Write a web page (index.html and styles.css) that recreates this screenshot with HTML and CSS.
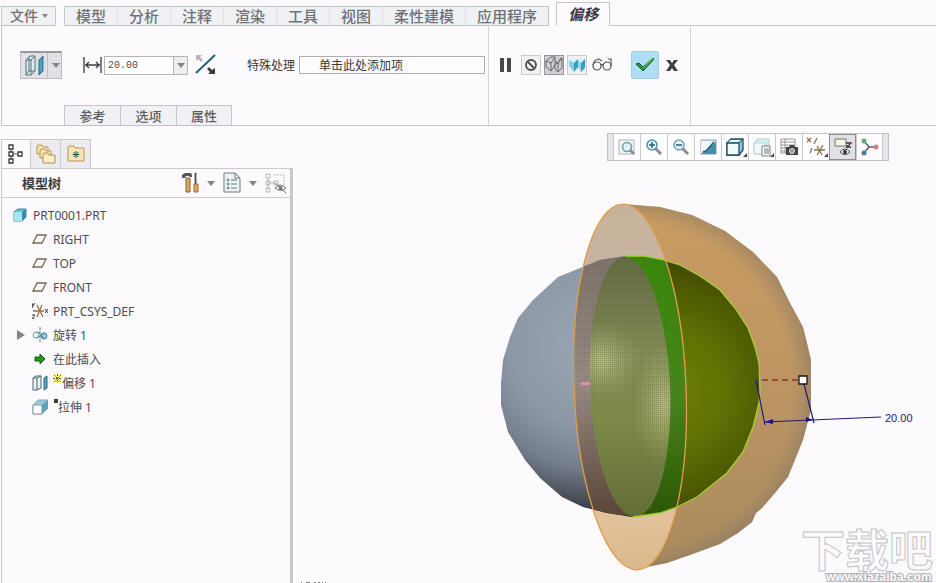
FILE: index.html
```html
<!DOCTYPE html>
<html lang="zh-CN">
<head>
<meta charset="utf-8">
<title>PRT0001 - 偏移</title>
<link rel="stylesheet" href="styles.css">
</head>
<body>
<header class="ribbon">
  <nav class="menu" aria-label="主菜单">
    <button class="menu-tab menu-file">文件<span class="caret caret-small"></span></button>
    <div class="menu-group">
      <button class="menu-tab">模型</button>
      <button class="menu-tab">分析</button>
      <button class="menu-tab">注释</button>
      <button class="menu-tab">渲染</button>
      <button class="menu-tab">工具</button>
      <button class="menu-tab">视图</button>
      <button class="menu-tab">柔性建模</button>
      <button class="menu-tab">应用程序</button>
    </div>
    <button class="menu-tab menu-active">偏移</button>
    <span class="menu-rest"></span>
  </nav>
  <div class="dashboard">
    <section class="settings">
      <div class="controls">
        <button class="type-button" aria-label="偏移类型">
          <svg width="24" height="26" viewBox="0 0 24 26"><path d="M4 7l4-4h5v15l-4 4H4z" fill="#d9edf2" stroke="#57717b"/><path d="M4 7h5v15M9 7l4-4M7 4v14l-3 4M7 18h6" fill="none" stroke="#57717b"/><path d="M17 7l4-4v15l-4 4z" fill="#4aa3c4" stroke="#2e6d87"/></svg>
          <span class="type-arrow"><span class="caret"></span></span>
        </button>
        <svg class="width-icon" width="20" height="18" viewBox="0 0 20 18"><path d="M1 1v16M18 1v16M2 9h15M6 6L3 9l3 3M13 6l3 3-3 3" fill="none" stroke="#3c3c40" stroke-width="1.3"/></svg>
        <div class="combo">
          <input class="combo-input" type="text" value="20.00" aria-label="偏移距离">
          <button class="combo-arrow" aria-label="最近使用的值"><span class="caret"></span></button>
        </div>
        <button class="plain flip" aria-label="反向">
          <svg width="24" height="24" viewBox="0 0 24 24"><path d="M2 20L21 2" stroke="#255f7d" stroke-width="2"/><path d="M2 2h6L6 4l3 3-2 2-3-3-2 2z" fill="#b9b4b4"/><path d="M21 21h-7l2-2-3-3 2-2 3 3 3-2z" fill="#3b3a3e"/></svg>
        </button>
        <label class="collector-label" for="special">特殊处理</label>
        <input class="collector" id="special" type="text" value="单击此处添加项">
      </div>
      <div class="panel-tabs">
        <button class="panel-tab">参考</button>
        <button class="panel-tab">选项</button>
        <button class="panel-tab">属性</button>
      </div>
    </section>
    <section class="actions">
      <button class="plain pause" aria-label="暂停"><svg width="14" height="16" viewBox="0 0 14 16"><path d="M1 1h4v14H1zM8 1h4v14H8z" fill="#48484c"/></svg></button>
      <button class="mini" aria-label="无预览"><svg width="18" height="18" viewBox="0 0 18 18"><circle cx="9" cy="9" r="5" fill="none" stroke="#4c4c50" stroke-width="1.8"/><path d="M5.5 5.5l7 7" stroke="#4c4c50" stroke-width="1.8"/></svg></button>
      <button class="mini mini-pressed" aria-label="未附着预览"><svg width="18" height="18" viewBox="0 0 18 18"><path d="M1 5l5-4h4v8l-4 6-5-4zM1 5l5 2v8M6 7l4-6M10 9l6-7h1v10l-4 4-3-3zM10 5l3 3v8M13 8l4-6" fill="none" stroke="#5d5d62" stroke-width=".9"/></svg></button>
      <button class="mini" aria-label="附着预览"><svg width="18" height="18" viewBox="0 0 18 18"><path d="M0 3h18v5H0z" fill="#d5f2f8"/><path d="M1 4l5 3v9l-5-6z" fill="#82cde2"/><path d="M6 7l4-4v8l-4 5z" fill="#379dc0"/><path d="M10 4l3 3v9l-3-5z" fill="#8ed6e8"/><path d="M13 7l4-4v9l-4 4z" fill="#379dc0"/></svg></button>
      <button class="plain glasses" aria-label="预览"><svg width="20" height="16" viewBox="0 0 20 16"><g fill="none" stroke="#55555a" stroke-width="1.2"><circle cx="5" cy="9" r="4"/><circle cx="15" cy="9" r="4"/><path d="M9 8q1-1 2 0M1 8q1-6 6-6l3 2M19 9V2h-3"/></g></svg></button>
      <button class="confirm" aria-label="确定"><svg width="22" height="20" viewBox="0 0 22 20"><path d="M2 9l3-1 4 4L19 3l1 1L9 16z" fill="#2b9344" stroke="#165a2c"/><path d="M9 13L19 3" stroke="#85d26b"/></svg></button>
      <button class="plain cancel" aria-label="取消"><svg width="14" height="14" viewBox="0 0 14 14"><path d="M1 2h4l2 3 2-3h4L9 7l4 6H9L7 10l-2 3H1l4-6z" fill="#414145"/></svg></button>
    </section>
  </div>
</header>

<main class="workspace">
  <aside class="navigator">
    <div class="nav-tabs">
      <button class="nav-tab nav-current" aria-label="模型树"><svg width="16" height="22" viewBox="0 0 16 22"><path d="M3 6v12M3 11h7" stroke="#55555a" fill="none"/><path d="M1 2h4v4H1zM1 9h4v4H1zM1 16h4v4H1zM10 9h4v4h-4z" fill="#fff" stroke="#38383c" stroke-width="1.3"/></svg></button>
      <button class="nav-tab" aria-label="文件夹浏览器"><svg width="20" height="20" viewBox="0 0 20 20"><g fill="#f8e3ae" stroke="#b3965c"><path d="M1 2l1-1h4l1 2h5v7H1z"/><path d="M4 7l1-2h4l1 2h5v7H4z"/><path d="M7 11l1-2h4l1 2h6v8H7z"/></g><path d="M8 12h10v6H8z" fill="#fff0c5"/></svg></button>
      <button class="nav-tab" aria-label="收藏夹"><svg width="18" height="18" viewBox="0 0 18 18"><path d="M1 3l1-2h5l1 2h9v13H1z" fill="#fae6b4" stroke="#b39556"/><path d="M9 6v7M5.5 9.5h7M6.500 7l5 5M11.500 7l-5 5" stroke="#245b51"/></svg></button>
    </div>
    <div class="nav-panel">
      <div class="nav-header">
        <h2 class="nav-title">模型树</h2>
        <button class="plain" aria-label="设置"><svg width="18" height="22" viewBox="0 0 18 22"><path d="M1 3l3-2h6l1 2v2H9L8 4H5L4 6H1z" fill="#55565b"/><path d="M5 6h4v14H5z" fill="#dda85d" stroke="#886134"/><path d="M14 1h1v11h-1z" stroke="#66676c"/><path d="M13 12h4v8h-4z" fill="#e2a853" stroke="#946a36"/></svg></button>
        <span class="caret"></span>
        <button class="plain" aria-label="显示"><svg width="18" height="22" viewBox="0 0 18 22"><path d="M1 1h11l5 5v14H1z" fill="#eef4f5" stroke="#707a80"/><path d="M12 1v5h5" fill="none" stroke="#707a80"/><path d="M8 8h6M8 12h6M8 16h6" stroke="#54777d"/><g fill="none" stroke="#54777d"><circle cx="5" cy="8" r="1"/><circle cx="5" cy="12" r="1"/><circle cx="5" cy="16" r="1"/></g></svg></button>
        <span class="caret"></span>
        <button class="plain" aria-label="隐藏树"><svg width="22" height="22" viewBox="0 0 22 22"><g fill="none" stroke="#b6b5ba"><path d="M1 2h4v4H1zM1 9h4v4H1zM1 16h4v4H1zM9 9h4v4H9zM3 6v12M5 11h4"/><path d="M9 3h10v10" stroke-dasharray="2 1"/></g><path d="M10 16q5-6 11 0-5 5-11 0z" fill="#eee" stroke="#77777c"/><circle cx="15.5" cy="16" r="2" fill="#77777c"/><path d="M10 11l11 10" stroke="#77777c"/></svg></button>
      </div>
      <ul class="tree">
        <li class="row row-root"><svg width="14" height="14" viewBox="0 0 14 14"><path d="M1 4l4-3h8v8l-4 4H1z" fill="#62c4dc" stroke="#45808e"/><path d="M1 4h8v9H1z" fill="#a4e6f2"/><path d="M9 4l4-3v8l-4 4z" fill="#3590ab"/></svg><span>PRT0001.PRT</span></li>
        <li class="row"><svg width="16" height="16" viewBox="0 0 16 16"><path d="M5 4h9l-4 8H1z" fill="none" stroke="#786b50" stroke-width="1.3"/></svg><span>RIGHT</span></li>
        <li class="row"><svg width="16" height="16" viewBox="0 0 16 16"><path d="M5 4h9l-4 8H1z" fill="none" stroke="#786b50" stroke-width="1.3"/></svg><span>TOP</span></li>
        <li class="row"><svg width="16" height="16" viewBox="0 0 16 16"><path d="M5 4h9l-4 8H1z" fill="none" stroke="#786b50" stroke-width="1.3"/></svg><span>FRONT</span></li>
        <li class="row"><svg width="16" height="16" viewBox="0 0 16 16"><path d="M1 8h11M5 2l6 12M10 2L5 14" stroke="#94714b" stroke-width="1.3"/><path d="M0 0l1 3 2-3M1 3L0 5M13 6l3 4M16 6l-3 4M0 12h3l-3 4h3" fill="none" stroke="#37373b"/></svg><span>PRT_CSYS_DEF</span></li>
        <li class="row row-parent"><button class="plain expander" aria-label="展开"><svg width="8" height="10" viewBox="0 0 8 10"><path d="M0 0l8 5-8 5z" fill="#858489"/></svg></button><svg width="16" height="16" viewBox="0 0 16 16"><path d="M8 0v16" stroke="#58757f" stroke-dasharray="3 1"/><circle cx="4" cy="8" r="3" fill="#e4f1f5" stroke="#83a9b6"/><circle cx="12" cy="9" r="3" fill="#92cfe0" stroke="#3b8199"/><path d="M4 5q4 0 8 7M4 11q4 0 8-6" fill="none" stroke="#4a8ca1"/></svg><span>旋转 1</span></li>
        <li class="row"><svg width="16" height="16" viewBox="0 0 16 16"><path d="M3 6h5V3l5 5-5 5v-3H3z" fill="#2c941e" stroke="#16600e"/></svg><span>在此插入</span></li>
        <li class="row"><svg width="16" height="16" viewBox="0 0 16 16"><path d="M1 3l3-2h5v12l-4 2H1z" fill="#e8f4f6" stroke="#4a636d"/><path d="M1 3h4v12M5 3l4-2" fill="none" stroke="#4a636d"/><path d="M12 3l3-2v12l-3 2z" fill="#4da3c0" stroke="#2f6982"/></svg><span class="state"><svg class="mark" width="9" height="9" viewBox="0 0 9 9"><path d="M0 0h9v9H0z" fill="#fff78a"/><path d="M4.500 0v9M0 4.500h9M1 1l7 7M8 1L1 8" stroke="#6a651c" stroke-dasharray="2 1"/></svg>偏移 1</span></li>
        <li class="row"><svg width="16" height="16" viewBox="0 0 16 16"><path d="M1 6l5-5h10v8l-6 6H1z" fill="#91c9df" stroke="#8fb0bd"/><path d="M1 6h9v9H1z" fill="#fff" stroke="#8095a0"/><path d="M10 6l6-5v8l-6 6z" fill="#5fa0be"/></svg><span class="state"><svg class="mark" width="5" height="9" viewBox="0 0 5 9"><path d="M1 1h4v4H1z" fill="#3d3d40"/></svg>拉伸 1</span></li>
      </ul>
    </div>
  </aside>

  <section class="graphics">
    <div class="view-tools" role="toolbar" aria-label="视图">
      <span class="grip"></span>
      <button class="tool" aria-label="重新调整"><svg width="20" height="20" viewBox="0 0 20 20"><path d="M2 3h15v14H2z" fill="#f1f5f6" stroke="#a9b4b9"/><circle cx="10" cy="10" r="4.500" fill="#e0f4f7" stroke="#6a9aa3" stroke-width="1.500"/><path d="M13 13l4 4" stroke="#8d8b8d" stroke-width="2.500"/></svg></button>
      <button class="tool" aria-label="放大"><svg width="20" height="20" viewBox="0 0 20 20"><path d="M11 11l6 6" stroke="#8d8b8d" stroke-width="3"/><circle cx="8" cy="8" r="5" fill="#e1f6fa" stroke="#50919f" stroke-width="1.500"/><path d="M5 8h6M8 5v6" stroke="#225e70" stroke-width="1.500"/></svg></button>
      <button class="tool" aria-label="缩小"><svg width="20" height="20" viewBox="0 0 20 20"><path d="M11 11l6 6" stroke="#8d8b8d" stroke-width="3"/><circle cx="8" cy="8" r="5" fill="#e1f6fa" stroke="#76a2ad" stroke-width="1.500"/><path d="M5 8h6" stroke="#225e70" stroke-width="1.500"/></svg></button>
      <button class="tool" aria-label="重画"><svg width="20" height="20" viewBox="0 0 20 20"><path d="M3 3h15v14H3z" fill="#c6e3eb" stroke="#92a3ad"/><path d="M3 17h15V5z" fill="#4790ad"/><path d="M3 4h12L8 14l-5 2z" fill="#eef7f9"/><path d="M5 15l3-1 8-9" fill="none" stroke="#2d5c70" stroke-width="1.500"/></svg></button>
      <button class="tool" aria-label="显示样式"><svg width="20" height="20" viewBox="0 0 20 20"><path d="M2 6l4-4h12v11l-4 5H2z" fill="#90c8dc" stroke="#214d5c" stroke-width="1.300"/><path d="M2 6h12v12H2z" fill="#f0fafc" stroke="#214d5c" stroke-width="1.300"/><path d="M3 5l3-2h10l-3 2z" fill="#e8f7fa"/><path d="M14 6l4-4" stroke="#214d5c"/></svg><span class="corner"></span></button>
      <button class="tool" aria-label="已命名视图"><svg width="20" height="20" viewBox="0 0 20 20"><path d="M2 6l4-4h11v11l-4 4H2z" fill="#d8edf1" stroke="#b2cdd3"/><path d="M2 6h11v11H2z" fill="#eefafc" stroke="#b7d3d8"/><path d="M10 9h8v10h-8z" fill="#fff" stroke="#7c7b7d"/><path d="M12 12h5M12 14h5M12 16h5" stroke="#737377"/></svg><span class="corner"></span></button>
      <button class="tool" aria-label="视图管理器"><svg width="20" height="20" viewBox="0 0 20 20"><path d="M2 2h14v14H2zM2 5h14M2 8h14M2 11h14M2 14h14M6 2v14" fill="#fff" stroke="#96969a"/><path d="M7 10h3l1-2h4l1 2h3v8H7z" fill="#414146"/><circle cx="13" cy="14" r="2.500" fill="#9a9a9e" stroke="#e3e3e5"/></svg></button>
      <button class="tool" aria-label="基准显示"><svg width="20" height="20" viewBox="0 0 20 20"><g fill="none" stroke="#8f7044" stroke-width="1.300"><path d="M1 1l4 4M5 1L1 5M11 1L8 7M6 11l-2 5M8 13h11M11 9l5 9M17 8l-6 10"/></g></svg><span class="corner"></span></button>
      <button class="tool tool-pressed" aria-label="注释显示"><svg width="20" height="20" viewBox="0 0 20 20"><path d="M2 2h11v7H2z" fill="#f7f5e9" stroke="#77776b"/><path d="M13 6h5l-4 4h4M14 8v3" fill="none" stroke="#39393c" stroke-width="1.300"/><path d="M7 15q5-6 10 0-5 5-10 0z" fill="#fff" stroke="#3d3d42"/><circle cx="12" cy="15" r="2" fill="#303035"/></svg></button>
      <button class="tool" aria-label="旋转中心"><svg width="20" height="20" viewBox="0 0 20 20"><path d="M4 4l5 6-5 6M9 10h7" fill="none" stroke="#58605f" stroke-width="1.500"/><circle cx="4" cy="4" r="2.500" fill="#65aa82"/><circle cx="4" cy="16" r="2.500" fill="#487d9e"/><circle cx="16" cy="10" r="2.500" fill="#c78386"/></svg></button>
      <span class="grip"></span>
    </div>
    <svg class="scene" viewBox="293 162 643 421" preserveAspectRatio="xMinYMin meet" role="img" aria-label="球面偏移预览">
      <defs>
        <linearGradient id="shell" x1="0" y1="0" x2="0" y2="1"><stop offset="0" stop-color="#c99b60"/><stop offset=".5" stop-color="#bd9563"/><stop offset="1" stop-color="#a98a5d"/></linearGradient>
        <radialGradient id="shellEdge" gradientUnits="userSpaceOnUse" cx="628" cy="387" r="186"><stop offset=".88" stop-color="#777" stop-opacity="0"/><stop offset="1" stop-color="#6f6a5e" stop-opacity=".4"/></radialGradient>
        <linearGradient id="cut" x1="0" y1="0" x2="0" y2="1"><stop offset="0" stop-color="#c8b29a"/><stop offset=".25" stop-color="#c9b5a5"/><stop offset=".85" stop-color="#e2c29b"/><stop offset="1" stop-color="#dbb88a"/></linearGradient>
        <radialGradient id="steel" gradientUnits="userSpaceOnUse" cx="590" cy="345" r="180"><stop offset="0" stop-color="#9aa5b4"/><stop offset=".45" stop-color="#8d98a7"/><stop offset=".68" stop-color="#747e8b"/><stop offset=".84" stop-color="#4c535c"/><stop offset="1" stop-color="#24282c"/></radialGradient>
        <radialGradient id="olive" gradientUnits="userSpaceOnUse" cx="665" cy="390" r="140"><stop offset="0" stop-color="#6e7e06"/><stop offset=".4" stop-color="#627305"/><stop offset=".75" stop-color="#4c5902"/><stop offset="1" stop-color="#3a4100"/></radialGradient>
        <linearGradient id="mauve" x1="0" y1="0" x2="0" y2="1"><stop offset="0" stop-color="#7e7470"/><stop offset=".5" stop-color="#9c8d89"/><stop offset="1" stop-color="#5a4339"/></linearGradient>
        <linearGradient id="strip" x1="0" y1="0" x2="0" y2="1"><stop offset="0" stop-color="#368c06"/><stop offset=".55" stop-color="#46881a"/><stop offset="1" stop-color="#285600"/></linearGradient>
        <linearGradient id="inner" x1="0" y1="0" x2="0" y2="1"><stop offset="0" stop-color="#626b42"/><stop offset=".4" stop-color="#85905a"/><stop offset=".65" stop-color="#7f8d49"/><stop offset="1" stop-color="#647038"/></linearGradient>
        <radialGradient id="glow"><stop offset="0" stop-color="#c4c892" stop-opacity=".75"/><stop offset="1" stop-color="#a4ac70" stop-opacity="0"/></radialGradient>
        <pattern id="mesh" width="2" height="2" patternUnits="userSpaceOnUse"><path d="M0 0h1v1H0z" fill="#52502c" fill-opacity=".35"/></pattern>
        <clipPath id="ball"><path d="M633 517L607 513 583 507 562 497 540 478 525 460 508 432 501 405V383L503 360 510 337 518 318 533 300 558 277 580 268 600 260 625 256 645 256 660 259 680 265 700 276 720 290 735 308 748 328 755 347 759 363 760 390 759 403 753 427 743 452 727 473 697 497 677 507 660 513z"/></clipPath>
        <clipPath id="plane"><ellipse cx="630" cy="387" rx="56" ry="183" transform="rotate(-2.4 630 387)"/></clipPath>
        <clipPath id="disc"><ellipse cx="630" cy="387" rx="40" ry="130" transform="rotate(-2.4 630 387)"/></clipPath>
        <path id="shellShape" d="M623 204L660 207 692 215 725 231 753 252 777 277 790 303 803 327 807 343 811 360V410L803 440 788 477 775 493 762 508 756 513 752 522 738 533 720 544 690 555 667 563 637 569 630 387z"/>
      </defs>
      <use href="#shellShape" fill="url(#shell)"/>
      <use href="#shellShape" fill="url(#shellEdge)"/>
      <ellipse cx="630" cy="387" rx="56" ry="183" transform="rotate(-2.4 630 387)" fill="url(#cut)"/>
      <g clip-path="url(#ball)">
        <path d="M500 250h135v270H500z" fill="url(#steel)"/>
        <path d="M630 250h135v270H630z" fill="url(#olive)"/>
        <g clip-path="url(#plane)">
          <path d="M570 255h60v262h-60z" fill="url(#mauve)"/>
          <path d="M625 255h70v262h-70z" fill="url(#strip)"/>
          <g clip-path="url(#disc)">
            <path d="M585 255h90v262h-90z" fill="url(#inner)"/>
            <circle cx="602" cy="361" r="38" fill="url(#glow)"/>
            <ellipse cx="664" cy="405" rx="32" ry="60" fill="url(#glow)"/>
          </g>
          <path d="M570 255h120v262H570z" fill="url(#mesh)"/>
        </g>
      </g>
      <path d="M625 256L645 256 660 259 680 265 700 276 720 290 735 308 748 328 755 347 759 363 760 390 759 403 753 427 743 452 727 473 697 497 677 507 660 513 633 517" fill="none" stroke="#a6cf35" stroke-width="1.300"/>
      <ellipse cx="630" cy="387" rx="56" ry="183" transform="rotate(-2.4 630 387)" fill="none" stroke="#df9d4c" stroke-width="1.300"/>
      <path d="M581 382h9v3h-9z" fill="#e18bb0"/>
      <path d="M762 380h37" stroke="#96302b" stroke-width="1.300" stroke-dasharray="6 4"/>
      <path d="M756 380l9 45M804 384l10 39M765 422l116-5" fill="none" stroke="#201779" stroke-width="1.200"/>
      <path d="M765 422l8-3v5zM813 420l-7-3v5z" fill="#201779"/>
      <path d="M799 376h8v8h-8z" fill="#fff" stroke="#19191c" stroke-width="1.300"/>
      <text class="dimension" x="885" y="422">20.00</text>
      <text class="brand" x="801" y="567">下载吧</text>
      <text class="brand-url" x="826" y="581">www.xiazaiba.com</text>
      <path d="M301 582h1v1h-1zM306 582h4v1h-4zM314 582h2v1h-2zM318 582h2v1h-2zM322 582h1v1h-1zM325 582h1v1h-1z" fill="#77777a"/>
    </svg>
  </section>
</main>
</body>
</html>
```
FILE: styles.css
```css
* { box-sizing: border-box; }

body {
  margin: 0;
  min-height: 100vh;
  display: flex;
  flex-direction: column;
  background: #fcfafd;
  color: #4c4b50;
  font-family: "Noto Sans", "Noto Sans CJK SC", sans-serif;
  font-size: 12px;
}

button, input { font: inherit; color: inherit; margin: 0; }
button { display: flex; align-items: center; justify-content: center; padding: 0; }
svg { display: block; flex: none; }

.plain { border: 0; background: none; }

.caret {
  flex: none;
  border: 4px solid transparent;
  border-top: 5px solid #858489;
  border-bottom: 0;
}
.caret-small { border-width: 4px 3px 0; margin-left: 4px; }

/* Ribbon */
.menu { display: flex; align-items: flex-end; height: 26px; padding-left: 1px; }
.menu-tab {
  height: 20px;
  padding: 0 11px;
  border: 1px solid #c3c5c9;
  border-left: 0;
  background: #eff1f4;
  color: #707176;
  font-size: 15px;
  font-weight: 500;
  line-height: 18px;
}
.menu-file { padding: 0 7px 0 8px; border-left: 1px solid #c3c5c9; font-size: 14px; }
.menu-group { display: flex; margin-left: 8px; border-left: 1px solid #c3c5c9; }
.menu-group .menu-tab:not(:last-child) { border-right-color: #dfe0e4; }
.menu-active {
  height: 24px;
  margin-left: 7px;
  border: 1px solid #c3c5c9;
  border-bottom-color: #fcfafd;
  background: #fcfafd;
  color: #38383c;
  font-style: italic;
  font-weight: 700;
}
.menu-rest { flex: 1; border-bottom: 1px solid #c3c5c9; }

.dashboard {
  display: flex;
  margin-left: 1px;
  border-left: 1px solid #c3c5c9;
  border-bottom: 1px solid #c3c1c8;
}
.settings { width: 487px; padding-top: 25px; border-right: 1px solid #d3d1d7; }
.controls { display: flex; align-items: center; height: 28px; padding-left: 18px; }
.type-button {
  width: 42px;
  height: 28px;
  border: 1px solid #bdbdc1;
  border-top: 2px solid #99999d;
  background: #e1e0e5;
}
.type-arrow { display: flex; align-items: center; height: 100%; padding-left: 4px; margin-left: 1px; border-left: 1px solid #c0bfc4; }
.width-icon { margin: 0 1px 0 21px; }
.combo { display: flex; width: 84px; height: 19px; border: 1px solid #b5b5b9; }
.combo-input {
  flex: 1;
  min-width: 0;
  padding: 0 3px;
  border: 0;
  background: #fff;
  font-family: "Liberation Mono", monospace;
  font-size: 10px;
}
.combo-arrow { width: 14px; border: 0; border-left: 1px solid #b5b5b9; background: #eeedf1; }
.flip { margin-left: 6px; }
.collector-label { margin-left: 29px; color: #37373b; }
.collector {
  flex: 1;
  min-width: 0;
  height: 18px;
  margin: 0 3px 0 4px;
  padding: 0 19px;
  border: 1px solid #aeadb2;
  background: #fdfcfe;
  color: #37373b;
}
.panel-tabs { display: flex; margin: 26px 0 0 62px; }
.panel-tab {
  width: 56px;
  height: 20px;
  border: 1px solid #c3c5c9;
  border-right-width: 0;
  border-bottom: 0;
  background: #eff1f4;
  color: #5c5d62;
  font-size: 13px;
  font-weight: 500;
}
.panel-tab:last-child { border-right-width: 1px; }

.actions {
  display: flex;
  align-items: flex-start;
  width: 202px;
  padding: 25px 0 0 10px;
  border-right: 1px solid #d3d1d7;
}
.actions button { flex: none; height: 28px; }
.actions .mini {
  width: 20px;
  height: 20px;
  margin: 4px 3px 0 0;
  border: 1px solid #cbcbd0;
  background: #f1f1f4;
}
.actions .mini-pressed { border-color: #949499; background: #d0cfd3; }
.pause { margin-right: 8px; }
.glasses { margin-left: 2px; }
.confirm { width: 28px; margin: 0 6px 0 19px; border: 1px solid #a2cfe4; border-radius: 2px; background: #aeddf4; }

/* Navigator */
.workspace { flex: 1; display: flex; }
.navigator { flex: none; display: flex; flex-direction: column; width: 293px; padding: 13px 0 0 1px; }
.nav-tabs { display: flex; }
.nav-tab {
  width: 30px;
  height: 29px;
  border: 1px solid #cbcacf;
  border-left-width: 0;
  border-bottom: 0;
  background: #ececf0;
}
.nav-current { border-left-width: 1px; background: #fcfafd; }
.nav-panel { flex: 1; border-left: 1px solid #c7c6cb; border-right: 3px solid #c8c7cb; border-top: 1px solid #cbcacf; }
.nav-header {
  display: flex;
  align-items: center;
  gap: 8px;
  height: 29px;
  padding: 0 3px 0 20px;
  border-bottom: 1px solid #cbcacf;
}
.nav-title { flex: 1; margin: 0; font-size: 13px; font-weight: 700; line-height: 18px; color: #3c3b40; }
.tree { margin: 0; padding: 5px 0; list-style: none; }
.row { display: flex; align-items: center; gap: 5px; height: 24px; padding-left: 30px; }
.row-root { padding-left: 11px; gap: 6px; }
.row-parent { padding-left: 15px; }
.expander { width: 8px; margin-right: 2px; }
.state { display: flex; align-items: center; }
.mark { align-self: flex-start; }

/* Graphics area */
.graphics { flex: 1; min-width: 0; padding-top: 7px; }
.view-tools {
  display: flex;
  width: max-content;
  height: 28px;
  margin: 0 47px 1px auto;
  border: 1px solid #c3c1c7;
}
.grip { width: 5px; background: #e4e3e8; }
.tool { position: relative; width: 27px; border: 0; border-left: 1px solid #c9c8cd; background: #fdfcfe; }
.tool:nth-last-child(2) { border-right: 1px solid #c9c8cd; }
.tool-pressed { border: 1px solid #8f8e94; background: #e1e0e5; }
.corner {
  position: absolute;
  right: 1px;
  bottom: 3px;
  border-left: 4px solid transparent;
  border-bottom: 4px solid #444348;
}
.scene { width: 100%; height: auto; }
.dimension { fill: #201779; font: 11px "Liberation Sans", sans-serif; }
.brand { fill: #fcfafd; stroke: #c4c3c7; stroke-width: 1; font: 700 44px "Noto Sans CJK SC", sans-serif; }
.brand-url { fill: #fcfafd; stroke: #b0afb4; stroke-width: 2; paint-order: stroke; font: 700 12px "Liberation Sans", sans-serif; }
```
